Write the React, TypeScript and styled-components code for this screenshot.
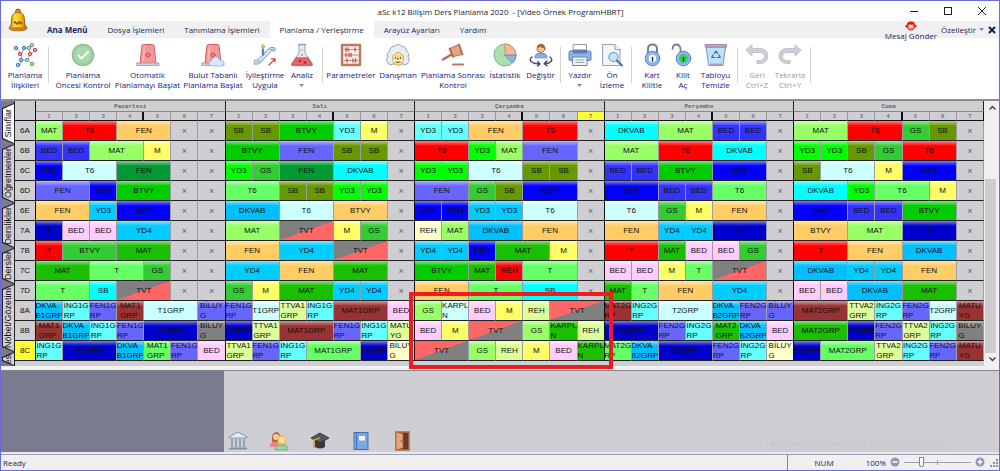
import React from 'react';
import styled, { createGlobalStyle, css } from 'styled-components';

const GlobalStyle = createGlobalStyle`
  * { box-sizing: border-box; }
  body { margin: 0; background: #fff; }
  button { font: inherit; color: inherit; background: none; border: 0; padding: 0; margin: 0; cursor: pointer; }
  svg { display: block; }
`;

const uiFont = css`font-family: 'Open Sans', 'Noto Sans', sans-serif;`;
const gridFont = css`font-family: 'Liberation Sans', Arial, sans-serif;`;

const Window = styled.div`
  ${uiFont}
  position: relative;
  display: flex;
  flex-direction: column;
  min-height: 100vh;
  border: 1px solid #6a6cd6;
  background: #fff;
  font-size: 8px;
  color: #1f2460;
`;

const TitleBar = styled.header`
  display: flex;
  align-items: center;
  height: 20px;
  color: #222;
`;

const TitleText = styled.h1`
  flex: 1;
  margin: 0;
  padding-left: 103px;
  text-align: center;
  white-space: pre;
  font-size: 8px;
  font-weight: 400;
`;

const WindowButton = styled.button`
  display: flex;
  align-items: center;
  justify-content: center;
  width: 34px;
  height: 20px;
`;

const Logo = styled.div`
  position: absolute;
  left: 6px;
  top: 7px;
`;

const RibbonTabs = styled.nav`
  display: flex;
  height: 17px;
  padding-left: 36px;
  background: #f0f0f0;
`;

const RibbonTab = styled.button<{ $active?: boolean; $bold?: boolean }>`
  padding: 0 10px;
  white-space: nowrap;
  background: ${p => (p.$active ? '#fff' : 'transparent')};
  font-weight: ${p => (p.$bold ? 700 : 400)};
`;

const TabsRight = styled.div`
  display: flex;
  align-items: flex-start;
  gap: 4px;
  margin-left: auto;
  padding-right: 3px;
`;

const MessageButton = styled.button`
  display: flex;
  flex-direction: column;
  align-items: center;
  height: 20px;
  line-height: 10px;
  white-space: nowrap;
`;

const CustomizeButton = styled.button`
  display: flex;
  align-items: center;
  gap: 3px;
  height: 17px;
`;

const Toolbar = styled.div`
  display: flex;
  align-items: flex-start;
  height: 61px;
  padding: 5px 4px 0;
`;

const ToolButton = styled.button<{ $w: number }>`
  display: flex;
  flex-direction: column;
  align-items: center;
  width: ${p => p.$w}px;
  color: #20207a;
  white-space: nowrap;
  &:disabled { color: #9a9a9e; cursor: default; }
`;

const ToolLabel = styled.span`
  display: flex;
  flex-direction: column;
  align-items: center;
  margin-top: 3px;
  line-height: 10px;
`;

const Divider = styled.span`
  width: 1px;
  height: 36px;
  margin: 4px 3px 0;
  background: #d4d4d4;
`;

const Workspace = styled.main`
  display: flex;
  border-top: 2px solid #8e8e90;
  background: #cfced2;
`;

const SideTabs = styled.div`
  display: flex;
  flex-direction: column;
  width: 14px;
  padding-top: 2px;
  border-right: 1px solid #222;
  background: #7b7b8f;
`;

const SideTab = styled.button<{ $h: number; $active?: boolean }>`
  ${gridFont}
  position: relative;
  display: flex;
  align-items: center;
  justify-content: center;
  height: ${p => p.$h}px;
  padding-left: 1px;
  overflow: hidden;
  font-size: 9px;
  line-height: 11px;
  color: #111;
  background: #222;
  clip-path: polygon(100% 0, 1px 5px, 1px calc(100% - 5px), 100% 100%);
  &::before {
    content: '';
    position: absolute;
    inset: 1px 0 1px 1px;
    background: ${p => (p.$active ? '#fff' : '#d4d4d8')};
    clip-path: polygon(100% 0, 1px 5px, 1px calc(100% - 5px), 100% 100%);
  }
`;

const SideLabel = styled.span`
  position: relative;
  writing-mode: vertical-rl;
  transform: rotate(180deg);
`;

const GridArea = styled.div`
  position: relative;
  flex: 1;
  min-width: 0;
  padding-bottom: 5px;
`;

const Timetable = styled.table`
  ${gridFont}
  width: 100%;
  table-layout: fixed;
  border-collapse: separate;
  border-spacing: 0;
  font-size: 8px;
  color: #111;
`;

const LabelCol = styled.col`width: 21px;`;

const Corner = styled.td`
  padding: 0;
  border-right: 1px solid #111;
  border-bottom: 1px solid #111;
`;

const DayHead = styled.th`
  height: 11px;
  padding: 0;
  font-family: 'Liberation Mono', monospace;
  font-size: 6px;
  line-height: 9px;
  color: #666;
  border-right: 1px solid #222;
  border-bottom: 1px solid #88888c;
`;

const HourHead = styled.th<{ $n: number; $current?: boolean }>`
  height: 9px;
  padding: 0;
  font-size: 6px;
  line-height: 8px;
  color: #777;
  background: ${p => (p.$current ? '#ffff33' : 'transparent')};
  border-right: ${p => (p.$n === 4 ? '2px solid #111' : p.$n === 7 ? '1px solid #111' : '1px solid #99999d')};
  border-bottom: 1px solid #111;
`;

const RowHead = styled.th<{ $current?: boolean }>`
  height: 20px;
  padding: 0;
  font-weight: 400;
  line-height: 10px;
  background: ${p => (p.$current ? '#ffff33' : 'transparent')};
  border-right: 1px solid #111;
  border-bottom: 1px solid #222;
`;

const Lesson = styled.td<{ $bg: string; $dayEnd: boolean }>`
  height: 20px;
  padding: 0;
  overflow: hidden;
  line-height: 10px;
  background: ${p => p.$bg};
  border-right: 1px solid ${p => (p.$dayEnd ? '#111' : '#9c9ca4')};
  border-bottom: 1px solid #222;
`;

const LessonText = styled.div`
  display: flex;
  align-items: center;
  justify-content: center;
  height: 19px;
  white-space: pre;
`;

const Free = styled(Lesson)`
  text-align: center;
  color: #666;
  font-size: 9px;
`;

const Highlight = styled.div`
  position: absolute;
  top: 191px;
  left: calc(21px + (100% - 21px) * 0.4 - 6px);
  width: calc((100% - 21px) * 0.2 + 14px);
  height: 77px;
  border: 4px solid #ed1c24;
  pointer-events: none;
  z-index: 1;
`;

const ScrollBar = styled.div`
  display: flex;
  flex-direction: column;
  width: 15px;
  padding-left: 1px;
  background: #f0f0f0;
`;

const ScrollButton = styled.button`
  display: flex;
  align-items: center;
  justify-content: center;
  height: 13px;
`;

const ScrollTrack = styled.div`
  flex: 1;
  display: flex;
  flex-direction: column;
  padding-top: 65px;
`;

const ScrollThumb = styled.div`
  flex: 1;
  width: 11px;
  background: #cdcdcd;
`;

const Splitter = styled.div`
  height: 5px;
  background: #f2f1f2;
  border-bottom: 1px solid #858585;
`;

const BottomPanel = styled.section`
  flex: 1;
  display: flex;
  min-height: 81px;
  background: #cfced2;
`;

const PanelSide = styled.div`
  width: 223px;
  background: #7b7b8f;
`;

const PanelIcons = styled.div`
  display: flex;
  align-items: flex-end;
  gap: 21px;
  padding: 0 0 1px 4px;
`;

const Ghost = styled.div`
  align-self: flex-end;
  display: flex;
  align-items: center;
  gap: 10px;
  width: 185px;
  height: 17px;
  margin-left: auto;
  margin-right: 49px;
  padding-left: 6px;
  color: #c5c5c9;
  background: #cdcdd1;
`;

const StatusBar = styled.footer`
  display: flex;
  align-items: center;
  height: 18px;
  padding: 0 0 0 2px;
  border-top: 2px solid #e9e9ec;
  background: #f1eeee;
  box-shadow: inset 0 1px #9aa0b8;
`;

const StatusRight = styled.div`
  display: flex;
  align-items: center;
  gap: 4px;
  height: 16px;
  margin-left: auto;
  padding-left: 27px;
  border-left: 1px solid #7f89a8;
`;

const NumLock = styled.span`margin-right: 28px;`;

const RoundButton = styled.button`
  width: 10px;
  height: 10px;
`;

const ZoomSlider = styled.input`
  appearance: none;
  width: 67px;
  height: 12px;
  margin: 0;
  background: linear-gradient(#9aa3bd, #9aa3bd) center / 100% 1px no-repeat,
    linear-gradient(#9aa3bd, #9aa3bd) center / 1px 5px no-repeat;
  &::-webkit-slider-thumb {
    appearance: none;
    width: 5px;
    height: 10px;
    border: 1px solid #7683a8;
    border-radius: 1px 1px 3px 3px;
    background: #fff;
  }
`;

/* ---------- drawings ---------- */

const Bell = () => (
  <svg width="22" height="24" viewBox="0 0 22 24">
    <defs>
      <linearGradient id="bell" x1="0" x2="1">
        <stop offset="0" stopColor="#d97a00" /><stop offset=".35" stopColor="#ffe23a" />
        <stop offset=".7" stopColor="#f9ae0a" /><stop offset="1" stopColor="#b75a00" />
      </linearGradient>
    </defs>
    <circle cx="11" cy="3.500" r="2.400" fill="#e9a010" stroke="#7c4a08" />
    <path d="M4.500 16 C4 7 6 4.500 11 4.500 S18 7 17.500 16 L20 20 Q20 22.500 11 22.800 Q2 22.500 2 20Z" fill="url(#bell)" stroke="#8c5206" strokeWidth=".8" />
    <ellipse cx="11" cy="20.500" rx="7.500" ry="1.300" fill="#c87a10" />
    <path d="M7 15q1.500-2 2 0t2 0 2 0 2-1" fill="none" stroke="#7d4c08" strokeWidth="1.300" />
  </svg>
);

const Monkey = () => (
  <svg width="14" height="10" viewBox="0 0 14 11">
    <path d="M2.500 4Q3 0 7 .5q4-.5 4.500 3.500 2 0 1.700 2-.5 1.500-2 1.200Q10 10.500 7 10.500T2.800 7.200Q1 7.500.7 6q0-2 1.800-2z" fill="#e51c1c" />
    <path d="M4 5q1.500-2 3-.5Q8.500 3 10 5q0 4-3 4.300Q4 9 4 5z" fill="#fff" />
    <path d="M5 5.500h1M8 5.500h1M5.500 7.500q1.500 1 3 0" stroke="#e51c1c" strokeWidth="1" fill="none" />
  </svg>
);

const Svg = ({ children }: { children: React.ReactNode }) => (
  <svg width="24" height="24" viewBox="0 0 24 24" strokeLinecap="round" strokeLinejoin="round">{children}</svg>
);

const siren = (
  <>
    <path d="M4 20 6 2.500Q6.200 1.500 7.500 1.500h9q1.300 0 1.500 1L20 20z" fill="#f59797" stroke="#cf5f66" />
    <path d="M8.500 4 7 18" stroke="#f9baba" strokeWidth="1.500" />
    <circle cx="12" cy="12" r="2" fill="#f28b8b" stroke="#c94850" />
    <rect x="1" y="20" width="22" height="2.500" fill="#c9d3dc" stroke="#8f9dab" strokeWidth=".8" />
  </>
);

const padlockBody = (fill: string) => (
  <>
    <circle cx="12.500" cy="15.500" r="7.300" fill="#8fb5ee" stroke="#5a86c8" />
    <circle cx="12.500" cy="15.500" r="4.300" fill={fill} stroke="#6e9adb" strokeWidth=".6" />
    <path d="M12.500 14.500v3.500" stroke="#1c355e" strokeWidth="1.500" />
  </>
);

const icons: Record<string, React.ReactNode> = {
  relations: (
    <>
      <path d="M4 5l4 6M8 11l1 6-2 5M8 11l4-6h4M16 5l3-3M23 7l-6 4-2 6M15 17h-6M15 17l5 5M16 5l1 6M12 5l-4 6" fill="none" stroke="#8a93a8" strokeWidth=".8" />
      {[[3, 5], [11, 5], [8, 17], [5, 22]].map(([x, y]) => <circle key={`${x}${y}`} cx={x} cy={y} r="1.700" fill="#9cc0f2" stroke="#3f74c4" />)}
      {[[7, 11], [22, 7], [17, 11]].map(([x, y]) => <circle key={`${x}${y}`} cx={x} cy={y} r="1.700" fill="#f59a9a" stroke="#d63d46" />)}
      {[[19, 2], [14, 17], [19, 21], [16, 5]].map(([x, y]) => <circle key={`${x}${y}`} cx={x} cy={y} r="1.700" fill="#b8e0bd" stroke="#58a768" />)}
    </>
  ),
  check: (
    <>
      <circle cx="12" cy="12" r="10.500" fill="#a9d9ac" stroke="#85bf8d" strokeWidth="1.600" strokeDasharray="2 1.300" />
      <circle cx="12" cy="12" r="8.500" fill="none" stroke="#8fc896" strokeWidth=".6" />
      <path d="M7.500 12.300l3 3L17 9" fill="none" stroke="#fff" strokeWidth="1.800" />
    </>
  ),
  siren,
  cloud: (
    <>
      {siren}
      <path d="M11 23q-3-.3-3-3t3-2.700Q12 13 16 14q2.500.8 2.700 3.300 4-.5 4.300 2.700 0 3-3 3z" fill="#d7e9fa" stroke="#9dbbe0" />
    </>
  ),
  escalator: (
    <>
      <path d="M1.500 21h4.500L18.500 8H22q1.500-3-1-3.500h-4L4.500 17H2Q0 18.500 1.500 21z" fill="#d9e3ec" stroke="#8ba0b5" />
      <circle cx="10" cy="3.500" r="1.500" fill="#f4d08a" stroke="#c08a3a" strokeWidth=".8" />
      <path d="M10 6.500v5" stroke="#4f83cc" strokeWidth="2.400" />
      <path d="M4 19l3-1M16.500 6.500h4" stroke="#8ba0b5" />
      <path d="M16 22l6-6M18.500 15.800H22V19" fill="none" stroke="#c7404a" strokeWidth="1.200" />
    </>
  ),
  flask: (
    <>
      <path d="M9 2v8L1.500 21q-.6 1.800 1.500 1.800h18q2.100 0 1.500-1.800L15 10V2z" fill="#e4edf6" stroke="#8ea3b8" />
      <path d="M6 15 2 21q-.2 1.300 1 1.300h18q1.200 0 1-1.300l-4-6z" fill="#e9656b" stroke="#c23d46" strokeWidth=".7" />
      <path d="M8.500 1.500h7" stroke="#8ea3b8" strokeWidth="1.600" />
      <circle cx="10" cy="18" r="1.300" fill="#b42530" /><circle cx="15" cy="19.500" r="1.300" fill="#b42530" />
      <circle cx="12" cy="12" r=".9" fill="#e9656b" /><circle cx="12" cy="7" r=".7" fill="#e9656b" />
    </>
  ),
  abacus: (
    <>
      <rect x="3" y="2" width="18" height="20" fill="#fbeee4" stroke="#bd7a60" strokeWidth="2.400" />
      <path d="M5 6.500h14M5 12h14M5 17.500h14" stroke="#9a6a5a" strokeWidth=".7" />
      <path d="M7 5v3M9 5v3M16 5v3M7 10.500v3M10 10.500v3M12 10.500v3M8 16v3M14 16v3M16.500 16v3" stroke="#d6454d" strokeWidth="1.300" />
    </>
  ),
  advisor: (
    <>
      <path d="M3 21Q-1 17 2 14q-2-4 1.500-6Q4 3.500 8 3.500 12-.5 16 3.500q4 0 4.500 4.500Q24 10 22 14q3 3-1 7-2 2-4 0H7q-2 2-4 0z" fill="#e9eef3" stroke="#8b9bac" strokeWidth=".9" />
      <path d="M6.500 14q0-2 2-2.500l2-2h3l2 2q2 .5 2 2.500v4q-1 4-5.500 4.500Q7.500 22 6.500 18z" fill="#fbdc8e" stroke="#cf9d4e" strokeWidth=".8" />
      <path d="M9.500 14.500v1M14.500 14.500v1M12 15v2M10 19q2 1 4 0" fill="none" stroke="#6a512d" strokeWidth="1" />
      <path d="M7.500 18q2-1.500 4.500-.3 2.500-1.200 4.500.3" fill="none" stroke="#fff" strokeWidth="1.400" />
    </>
  ),
  gavel: (
    <>
      <path d="M13 10 2 16.500" stroke="#b06a55" strokeWidth="2.400" />
      <path d="M9 5.500 18 1.500l3 10-8.500 2z" fill="#e8a383" stroke="#b8755f" strokeWidth="1.100" />
      <path d="M8.500 5.500l3.500 8.500M18 1.500l3.500 10" stroke="#b06a55" strokeWidth="1.800" />
      <path d="M12 21.500h10" stroke="#b8755f" strokeWidth="2.200" />
    </>
  ),
  pie: (
    <>
      <circle cx="12" cy="12" r="11" fill="#addfb0" stroke="#77af85" strokeWidth=".9" />
      <path d="M12 12V1a11 11 0 0 1 11 11z" fill="#fbb795" stroke="#d28363" strokeWidth=".8" />
      <path d="M12 12h11a11 11 0 0 1-3.300 7.800z" fill="#8ab3f2" stroke="#5581c8" strokeWidth=".8" />
    </>
  ),
  swap: (
    <>
      <path d="M6 14.500q0-4 4-4h4q4 0 4 4z" fill="#7fb0ea" stroke="#4e7fc0" strokeWidth=".8" />
      <circle cx="12" cy="5.500" r="4" fill="#f3c68b" stroke="#a4643c" strokeWidth=".9" />
      <path d="M8 5q0-4 4-4t4 4q-4 0-5-1.500Q10 5 8 5z" fill="#a4643c" />
      <path d="M3 14Q0 16 2 18.500q3 2.500 8 2.500M21 14q3 2 1 4.500-2 2-6 2.300M8.500 18.500 11 21l-2.500 2M18 18l-3 2.700 3 2" fill="none" stroke="#3f4a57" strokeWidth="1.400" />
    </>
  ),
  print: (
    <>
      <rect x="5.500" y="1.500" width="13" height="7" fill="#fff" stroke="#8b9bac" />
      <rect x="1" y="8" width="22" height="9.500" rx="1.500" fill="#8fb1e4" stroke="#5b7fb5" />
      <path d="M5 6.500h14v4H5z" fill="#5f7ea8" />
      <rect x="5" y="14" width="14" height="8.500" fill="#eef2f6" stroke="#76889b" />
      <path d="M8 17h8M8 19.500h8" stroke="#9aa8b5" />
    </>
  ),
  preview: (
    <>
      <path d="M3 1.500h12l5 5v16H3z" fill="#f4f7fa" stroke="#92a2b2" />
      <path d="M15 1.500v5h5" fill="#fff" stroke="#92a2b2" />
      <circle cx="13.500" cy="14" r="4.500" fill="#c5e6f8" stroke="#6898cc" strokeWidth="1.200" />
      <path d="M17 17.500l5 5" stroke="#3f71b5" strokeWidth="2" />
    </>
  ),
  lock: (
    <>
      <path d="M8 10V6q0-4.500 4.500-4.500T17 6v4" fill="none" stroke="#6f8398" strokeWidth="2" />
      {padlockBody('#f4fbff')}
    </>
  ),
  unlock: (
    <>
      <path d="M1.500 6Q2 1.500 5.500 1.500T9.500 6v4" fill="none" stroke="#6f8398" strokeWidth="1.800" />
      {padlockBody('#27dc3a')}
    </>
  ),
  bin: (
    <>
      <path d="M2.500 4h19L19 22.500H5z" fill="#bde2f8" stroke="#7d93b4" />
      <path d="M1.500 1.500h21V4h-21z" fill="#c8a9c9" stroke="#8d7395" strokeWidth=".8" />
      <path d="M6 20.500h12v2H6z" fill="#b596bb" />
      <path d="M10.500 10.500 12 8l1.700 2.500M15 12l1.200 2.500h-3M9 12l-1.200 2.500H11" fill="none" stroke="#42689f" strokeWidth="1.200" />
    </>
  ),
  undo: <path d="M7 2v3.500h8.500a7 7 0 0 1 0 15H12v-3h3.500a4 4 0 0 0 0-8H7V13L1 7.500z" fill="#ceced8" stroke="#b9b9c6" strokeWidth=".8" />,
  redo: <path d="M17 2v3.500H8.500a7 7 0 0 0 0 15H12v-3H8.500a4 4 0 0 1 0-8H17V13l6-5.500z" fill="#ceced8" stroke="#b9b9c6" strokeWidth=".8" />,
};

const Caret = ({ color = '#6d8fc4' }: { color?: string }) => (
  <svg width="5" height="3" viewBox="0 0 5 3"><path d="M0 0h5L2.500 3z" fill={color} /></svg>
);

const CaretLine = styled.span`
  display: flex;
  align-items: center;
  height: 10px;
`;

type Tool = { icon: string; lines: string[]; w: number; menu?: boolean; disabled?: boolean };

const toolGroups: Tool[][] = [
  [{ icon: 'relations', lines: ['Planlama', 'İlişkileri'], w: 40 }],
  [
    { icon: 'check', lines: ['Planlama', 'Öncesi Kontrol'], w: 62 },
    { icon: 'siren', lines: ['Otomatik', 'Planlamayı Başlat'], w: 67 },
    { icon: 'cloud', lines: ['Bulut Tabanlı', 'Planlama Başlat'], w: 64 },
    { icon: 'escalator', lines: ['İyileştirme', 'Uygula'], w: 40 },
    { icon: 'flask', lines: ['Analiz'], w: 34, menu: true },
  ],
  [
    { icon: 'abacus', lines: ['Parametreler'], w: 50 },
    { icon: 'advisor', lines: ['Danışman'], w: 44 },
    { icon: 'gavel', lines: ['Planlama Sonrası', 'Kontrol'], w: 66 },
    { icon: 'pie', lines: ['İstatistik'], w: 38 },
    { icon: 'swap', lines: ['Değiştir'], w: 33 },
  ],
  [
    { icon: 'print', lines: ['Yazdır'], w: 32, menu: true },
    { icon: 'preview', lines: ['Ön', 'İzleme'], w: 32 },
  ],
  [
    { icon: 'lock', lines: ['Kart', 'Kilitle'], w: 34 },
    { icon: 'unlock', lines: ['Kilit', 'Aç'], w: 28 },
    { icon: 'bin', lines: ['Tabloyu', 'Temizle'], w: 37 },
  ],
  [
    { icon: 'undo', lines: ['Geri', 'Ctrl+Z'], w: 32, disabled: true },
    { icon: 'redo', lines: ['Tekrarla', 'Ctrl+Y'], w: 34, disabled: true },
  ],
];

/* ---------- timetable data ---------- */

const colors: Record<string, string> = {
  lime: '#99ff66', red: '#ff0000', orange: '#ffcc66', royal: '#3333ff', yellow: '#ffff66',
  blue: '#0000ff', ice: '#ccffff', forest: '#009933', violet: '#6666ff', green: '#00cc00',
  sky: '#00ccff', navy: '#0000cc', pink: '#ffccff', leaf: '#33cc33', grass: '#19bf00',
  mint: '#66ff66', olive: '#669900', aqua: '#66ffff', neon: '#00ff00', cyan: '#00ffff',
  azure: '#00bfff', brown: '#993333', pear: '#ddff99', cream: '#ffffcc', gray: '#808080',
};

const gloss = 'linear-gradient(rgba(255,255,255,.5), rgba(255,255,255,0) 5px)';
const split: Record<string, string> = {
  grayRed: 'linear-gradient(to bottom right, #808080 50%, #ff6666 50%)',
  redGray: 'linear-gradient(to bottom right, #ff6666 50%, #808080 50%)',
};
const paint = (c: string) => split[c] ?? `${gloss}, ${colors[c]}`;

/* Each entry is "text colour [hours]"; "/" breaks the text, "-" is a free hour. */
const rows: [string, string[]][] = [
  ['6A', [
    'MAT lime,T6 red 2,FEN orange 2,-,-',
    'SB olive,SB olive,BTVY green 2,YD3 aqua,M yellow,-',
    'YD3 aqua,YD3 aqua,FEN orange 2,T6 red 2,-',
    'DKVAB cyan 2,MAT lime 2,BED royal,BED royal,-',
    'MAT lime 2,T6 red 2,GS leaf,SB olive,-']],
  ['6B', [
    'BED royal,BED royal,MAT lime 2,M yellow,-,-',
    'BTVY green 2,FEN violet 2,SB olive,SB olive,-',
    'T6 red 2,YD3 neon,MAT lime,FEN violet 2,-',
    'MAT lime 2,T6 red 2,DKVAB cyan 2,-',
    'YD3 neon,YD3 neon,SB olive,GS leaf,T6 red 2,-']],
  ['6C', [
    'MAT blue,T6 ice 2,FEN forest 2,-,-',
    'YD3 neon,GS leaf,FEN forest 2,DKVAB cyan 2,-',
    'YD3 neon,YD3 neon,T6 ice 2,SB olive,SB olive,-',
    'BED royal,BED royal,BTVY green 2,MAT blue 2,-',
    'SB olive,T6 ice 2,M yellow,MAT blue 2,-']],
  ['6D', [
    'FEN violet 2,MAT blue,BTVY green 2,-,-',
    'T6 mint 2,SB olive,SB olive,YD3 neon,YD3 neon,-',
    'FEN violet 2,GS leaf,SB olive,MAT blue 2,-',
    'MAT blue 2,BED royal,BED royal,T6 mint 2,-',
    'DKVAB cyan 2,YD3 neon,T6 mint 2,M yellow,-']],
  ['6E', [
    'FEN orange 2,YD3 sky,MAT blue 2,-,-',
    'DKVAB azure 2,T6 ice 2,BTVY orange 2,-',
    'MAT blue,REH blue,YD3 sky,YD3 sky,T6 ice 2,-',
    'T6 ice 2,GS leaf,M yellow,FEN orange 2,-',
    'MAT blue 2,BED royal,BED royal,BTVY green 2,-']],
  ['7A', [
    'T navy,BED pink,BED pink,YD4 sky 2,-,-',
    'MAT lime 2,TVT grayRed 2,M yellow,GS leaf,-',
    'REH cream,MAT lime,DKVAB azure 2,FEN orange 2,-',
    'FEN orange 2,YD4 sky,YD4 sky,T navy 2,-',
    'BTVY orange 2,MAT lime 2,T navy 2,-']],
  ['7B', [
    'T red,BTVY leaf 2,MAT grass 2,-,-',
    'FEN orange 2,YD4 sky 2,TVT grayRed 2,-',
    'YD4 sky,YD4 sky,REH blue,MAT grass 2,M yellow,-',
    'T red 2,MAT grass,BED pink,BED pink,GS leaf,-',
    'T red 2,FEN orange 2,DKVAB azure 2,-']],
  ['7C', [
    'MAT grass 2,T mint 2,GS leaf,-,-',
    'YD4 sky 2,FEN orange 2,MAT grass 2,-',
    'BTVY green 2,MAT grass,REH red,T mint 2,-',
    'BED pink,BED pink,M yellow,T mint,TVT grayRed 2,-',
    'DKVAB azure 2,YD4 sky,YD4 sky,FEN orange 2,-']],
  ['7D', [
    'T mint 2,SB cyan,TVT grayRed 2,-,-',
    'GS leaf,M yellow,MAT grass 2,YD4 sky,YD4 sky,-',
    'FEN orange 2,T mint 2,SB cyan 2,-',
    'MAT grass,T mint,FEN orange 2,YD4 sky 2,-',
    'BED pink,BED pink,DKVAB azure 2,MAT grass 2,-']],
  ['8A', [
    'DKVA/B1GRP azure,İNG1G/RP aqua,FEN1G/RP violet,MAT1/GRP brown,T1GRP ice 2,BİLUY/G violet',
    'FEN1G/RP violet,T1GRP ice,TTVA1/GRP pear,İNG1G/RP aqua,MAT1GRP brown 2,BED pink',
    'GS lime,KARPL/N ice,BED pink,M yellow,REH pear,TVT redGray 2',
    'MAT2G/RP brown,İNG2G/RP aqua,T2GRP ice 2,DKVA/B2GRP azure,FEN2G/RP violet,BİLUY/G violet',
    'MAT2GRP brown 2,TTVA2/GRP pear,İNG2G/RP aqua,FEN2G/RP violet,T2GRP ice,MATU/YG brown']],
  ['8B', [
    'MAT1/GRP brown,DKVA/B1GRP azure,İNG1G/RP aqua,FEN1G/RP violet,T1GRP navy 2,BİLUY/G gray',
    'T1GRP navy,TTVA1/GRP pear,MAT1GRP brown 2,FEN1G/RP violet,İNG1G/RP aqua,MATU/YG pear',
    'BED pink,M yellow,TVT redGray 2,GS lime,KARPL/N grass,REH pear',
    'T2GRP navy 2,FEN2G/RP violet,İNG2G/RP aqua,MAT2/GRP grass,DKVA/B2GRP azure,BED pink',
    'MAT2GRP grass 2,T2GRP navy,FEN2G/RP violet,TTVA2/GRP pear,İNG2G/RP aqua,BİLUY/G gray']],
  ['8C', [
    'İNG1G/RP aqua,T1GRP navy 2,DKVA/B1GRP azure,MAT1/GRP mint,FEN1G/RP violet,BED pink',
    'TTVA1/GRP pear,FEN1G/RP violet,İNG1G/RP aqua,MAT1GRP mint 2,T1GRP navy,BİLUY/G cream',
    'TVT redGray 2,GS lime,REH pear,M yellow,BED pink,KARPL/N grass',
    'MAT2G/RP mint,DKVA/B2GRP azure,T2GRP navy 2,FEN2G/RP violet,İNG2G/RP aqua,BİLUY/G cream',
    'T2GRP navy,MAT2GRP mint 2,TTVA2/GRP pear,İNG2G/RP aqua,FEN2G/RP violet,MATU/YG brown']],
];

const days = ['Pazartesi', 'Salı', 'Çarşamba', 'Perşembe', 'Cuma'];
const hours = [1, 2, 3, 4, 5, 6, 7];

const DayCells = ({ plan, last }: { plan: string; last: boolean }) => {
  const items = plan.split(',');
  return (
    <>
      {items.map((item, i) => {
        const dayEnd = !last && i === items.length - 1;
        if (item === '-') return <Free key={i} $bg="transparent" $dayEnd={dayEnd}>×</Free>;
        const [text, color, span] = item.split(' ');
        return (
          <Lesson key={i} colSpan={Number(span ?? 1)} $bg={paint(color)} $dayEnd={dayEnd}>
            <LessonText>{text.replace('/', '\n')}</LessonText>
          </Lesson>
        );
      })}
    </>
  );
};

const sideTabs: [string, number][] = [
  ['Sınıflar', 41], ['Öğretmenler', 59], ['Derslikler', 45], ['Dersler', 36], ['Nöbet/Gözetim', 68], ['esi', 14],
];

const ribbonTabs = ['Ana Menü', 'Dosya İşlemleri', 'Tanımlama İşlemleri', 'Planlama / Yerleştirme', 'Arayüz Ayarları', 'Yardım'];

const panelIcons: [string, React.ReactNode][] = [
  ['Okul', <>
    <path d="M1 6 10 1l9 5v1H1z" fill="#e4edf5" stroke="#7f95ab" />
    <path d="M4 8v8M8 8v8M12 8v8M16 8v8" stroke="#8ca3ba" strokeWidth="2" />
    <path d="M1 17.500h18" stroke="#7f95ab" strokeWidth="2" />
  </>],
  ['Öğrenciler', <>
    <path d="M3 10Q2 2 7 1q4 0 4 5l-1 6H4z" fill="#b5633a" />
    <circle cx="7" cy="6" r="3" fill="#f7cf9b" />
    <path d="M1 15q0-4 5-4h4v5H1z" fill="#ef7f88" />
    <path d="M9 14Q7 4 13 4q5 0 4 10z" fill="#f0c052" />
    <circle cx="13" cy="9" r="3" fill="#fbdcae" />
    <path d="M6 19q0-5 5-5h3q5 0 5 5z" fill="#9bd4a2" stroke="#5c9f6b" strokeWidth=".7" />
  </>],
  ['Mezuniyet', <>
    <path d="M5 9v7q5 3 10 0V9z" fill="#3a3a3e" />
    <path d="M1 7 10 2l9 5-9 5z" fill="#55555b" stroke="#2b2b2f" strokeWidth=".8" />
    <path d="M10 7 4 9v8" fill="none" stroke="#d79a2c" strokeWidth="1.400" />
  </>],
  ['Dersler', <>
    <rect x="3" y="1.500" width="14" height="17" fill="#78a9e6" stroke="#3d71b8" />
    <path d="M5.500 2v16" stroke="#3d71b8" />
    <rect x="8" y="5" width="6" height="4.500" fill="#fff" />
  </>],
  ['Derslikler', <>
    <rect x="4" y="1" width="13" height="18" fill="#5b3d33" stroke="#b96d48" strokeWidth="1.600" />
    <path d="M4 1l7 2v14l-7 2z" fill="#eaa377" stroke="#a85e3c" strokeWidth=".8" />
    <circle cx="9.500" cy="10" r=".8" fill="#6b3a22" />
  </>],
];

export default function App() {
  return (
    <Window>
      <GlobalStyle />
      <TitleBar>
        <TitleText>aSc k12 Bilişim Ders Planlama 2020  - [Video Örnek ProgramHBRT]</TitleText>
        <WindowButton aria-label="Simge durumuna küçült">
          <svg width="8" height="8"><path d="M0 4.500h8" stroke="#222" /></svg>
        </WindowButton>
        <WindowButton aria-label="Ekranı kapla">
          <svg width="8" height="8"><rect x=".5" y=".5" width="7" height="7" fill="none" stroke="#222" /></svg>
        </WindowButton>
        <WindowButton aria-label="Kapat">
          <svg width="8" height="8"><path d="M0 0l8 8M8 0 0 8" stroke="#222" /></svg>
        </WindowButton>
      </TitleBar>
      <Logo><Bell /></Logo>
      <RibbonTabs>
        {ribbonTabs.map((t, i) => <RibbonTab key={t} $active={i === 3} $bold={i === 0}>{t}</RibbonTab>)}
        <TabsRight>
          <MessageButton><Monkey />Mesaj Gönder</MessageButton>
          <CustomizeButton>Özelleştir<Caret /></CustomizeButton>
          <CustomizeButton aria-label="Pencereyi kapat">
            <svg width="8" height="8"><path d="M1 1l6 6M7 1 1 7" stroke="#14204f" strokeWidth="2" /></svg>
          </CustomizeButton>
        </TabsRight>
      </RibbonTabs>
      <Toolbar>
        {toolGroups.map((group, g) => (
          <React.Fragment key={g}>
            {group.map(t => (
              <ToolButton key={t.icon} $w={t.w} disabled={t.disabled}>
                <Svg>{icons[t.icon]}</Svg>
                <ToolLabel>
                  {t.lines.map(l => <span key={l}>{l}</span>)}
                  {t.menu && <CaretLine><Caret /></CaretLine>}
                </ToolLabel>
              </ToolButton>
            ))}
            <Divider />
          </React.Fragment>
        ))}
      </Toolbar>
      <Workspace>
        <SideTabs>
          {sideTabs.map(([label, h], i) => (
            <SideTab key={label} $h={h} $active={i === 0}><SideLabel>{label}</SideLabel></SideTab>
          ))}
        </SideTabs>
        <GridArea>
          <Timetable>
            <colgroup>
              <LabelCol />
              {days.map(d => hours.map(h => <col key={d + h} />))}
            </colgroup>
            <thead>
              <tr>
                <Corner rowSpan={2} />
                {days.map(d => <DayHead key={d} colSpan={7}>{d}</DayHead>)}
              </tr>
              <tr>
                {days.map((d, di) => hours.map(h => (
                  <HourHead key={d + h} $n={h} $current={di === 2 && h === 7}>{h}</HourHead>
                )))}
              </tr>
            </thead>
            <tbody>
              {rows.map(([name, plan]) => (
                <tr key={name}>
                  <RowHead scope="row" $current={name === '8C'}>{name}</RowHead>
                  {plan.map((p, i) => <DayCells key={i} plan={p} last={i === 4} />)}
                </tr>
              ))}
            </tbody>
          </Timetable>
          <Highlight />
        </GridArea>
        <ScrollBar>
          <ScrollButton aria-label="Yukarı kaydır">
            <svg width="7" height="5"><path d="M.5 4.500l3-3 3 3" fill="none" stroke="#444" strokeWidth="1.500" /></svg>
          </ScrollButton>
          <ScrollTrack><ScrollThumb /></ScrollTrack>
          <ScrollButton aria-label="Aşağı kaydır">
            <svg width="7" height="5"><path d="M.5.5l3 3 3-3" fill="none" stroke="#444" strokeWidth="1.500" /></svg>
          </ScrollButton>
        </ScrollBar>
      </Workspace>
      <Splitter />
      <BottomPanel>
        <PanelSide />
        <PanelIcons>
          {panelIcons.map(([label, art]) => (
            <button key={label} aria-label={label}><svg width="20" height="20" viewBox="0 0 20 20">{art}</svg></button>
          ))}
        </PanelIcons>
        <Ghost><span>■</span>Pencere Ekran Alıntısı</Ghost>
      </BottomPanel>
      <StatusBar>
        Ready
        <StatusRight>
          <NumLock>NUM</NumLock>
          <label htmlFor="zoom">100%</label>
          <RoundButton aria-label="Uzaklaştır">
            <svg width="10" height="10"><circle cx="5" cy="5" r="4.500" fill="#8d99b8" /><path d="M2.500 5h5" stroke="#fff" strokeWidth="1.500" /></svg>
          </RoundButton>
          <ZoomSlider id="zoom" type="range" min={0} max={100} defaultValue={24} />
          <RoundButton aria-label="Yakınlaştır">
            <svg width="10" height="10"><circle cx="5" cy="5" r="4.500" fill="#8d99b8" /><path d="M2.500 5h5M5 2.500v5" stroke="#fff" strokeWidth="1.500" /></svg>
          </RoundButton>
          <svg width="10" height="12"><path d="M7 3h2v2H7zM4 6h2v2H4zM7 6h2v2H7zM1 9h2v2H1zM4 9h2v2H4zM7 9h2v2H7z" fill="#8a93ad" /></svg>
        </StatusRight>
      </StatusBar>
    </Window>
  );
}
